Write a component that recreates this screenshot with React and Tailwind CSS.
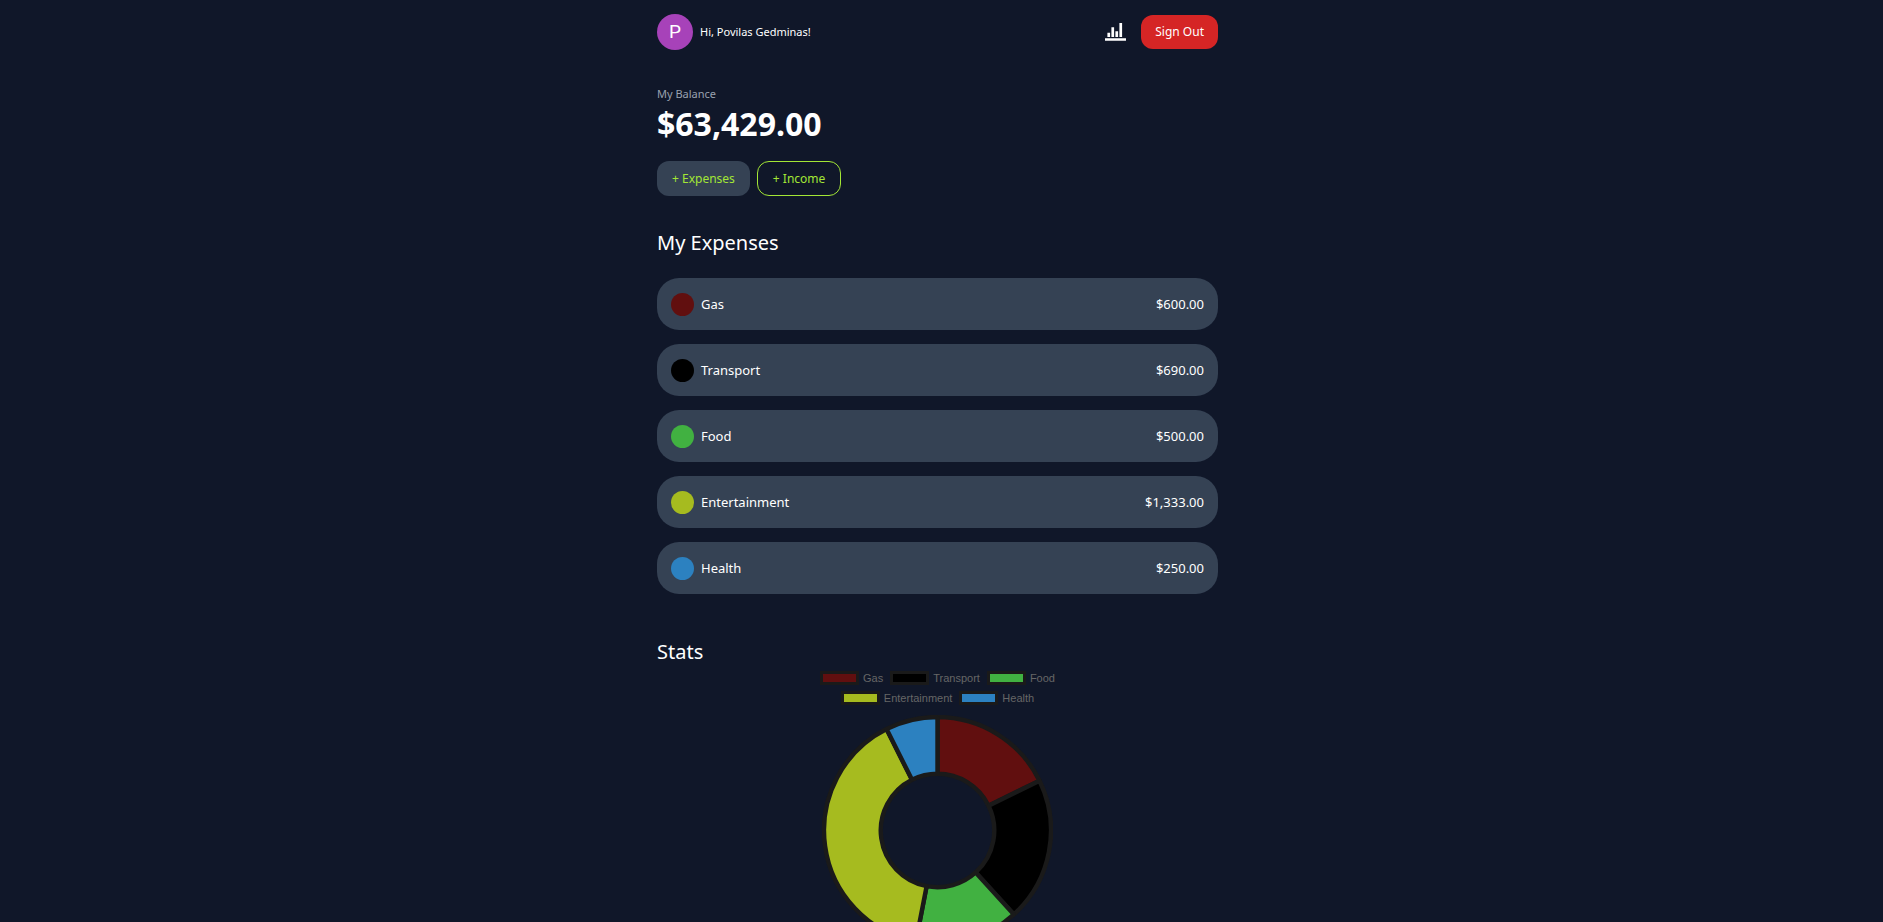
const expenses = [
  { name: "Gas", total: 600, color: "#610f0f" },
  { name: "Transport", total: 690, color: "#000000" },
  { name: "Food", total: 500, color: "#41b141" },
  { name: "Entertainment", total: 1333, color: "#a6bb1f" },
  { name: "Health", total: 250, color: "#2c81c0" },
];

const currency = new Intl.NumberFormat("en-US", { style: "currency", currency: "USD" });

const point = (r, a) => `${115 + r * Math.sin(a)} ${115 - r * Math.cos(a)}`;

function slices(items, outer, inner) {
  const sum = items.reduce((t, i) => t + i.total, 0);
  let angle = 0;
  return items.map((item) => {
    const start = angle;
    const end = start + (item.total / sum) * Math.PI * 2;
    angle = end;
    const large = end - start > Math.PI ? 1 : 0;
    return {
      ...item,
      d: `M${point(outer, start)}A${outer} ${outer} 0 ${large} 1 ${point(outer, end)}L${point(inner, end)}A${inner} ${inner} 0 ${large} 0 ${point(inner, start)}Z`,
    };
  });
}

function StatsIcon() {
  return (
    <svg viewBox="0 0 21 18" className="h-[18px] w-[21px]" fill="currentColor" aria-hidden="true">
      <path d="M2.4 9.7h2.7V14H2.4zM6.4 4.2h2.7V14H6.4zM10.4 8.2h2.7V14h-2.7zM14.4 0h2.7v14h-2.7zM0 15.2h21v2.5H0z" />
    </svg>
  );
}

function Header() {
  return (
    <header className="flex items-center justify-between">
      <div className="flex items-center gap-[7px]">
        <div className="flex size-9 items-center justify-center rounded-full bg-[#a742b9] font-[Roboto,sans-serif] text-[19px] leading-6 text-white">
          P
        </div>
        <small className="text-[11px] leading-4">Hi, Povilas Gedminas!</small>
      </div>
      <nav className="flex items-center gap-[15px]">
        <a href="#stats" aria-label="Stats">
          <StatsIcon />
        </a>
        <button type="button" className="h-[34px] rounded-xl bg-[#d52525] px-[14px] text-[12px] leading-4">
          Sign Out
        </button>
      </nav>
    </header>
  );
}

function ExpenseItem({ name, total, color }) {
  return (
    <li>
      <button
        type="button"
        className="flex h-[52px] w-full items-center justify-between rounded-[22px] bg-[#354254] px-[14px] text-[13px] leading-5"
      >
        <span className="flex items-center gap-[7px]">
          <span className="size-[23px] rounded-full" style={{ backgroundColor: color }} />
          {name}
        </span>
        <span>{currency.format(total)}</span>
      </button>
    </li>
  );
}

function Legend() {
  return (
    <ul className="flex w-[250px] flex-wrap justify-center gap-x-[7px] gap-y-1 font-['Liberation_Sans',Arial,sans-serif] text-[11px] leading-4 text-[#666]">
      {expenses.map((e) => (
        <li key={e.name} className="flex items-center gap-1">
          <span className="h-[14px] w-[39px] border-[3px] border-[#1a1a1a]" style={{ backgroundColor: e.color }} />
          {e.name}
        </li>
      ))}
    </ul>
  );
}

export default function App() {
  return (
    <div className="min-h-screen bg-[#101729] pr-2 font-['Noto_Sans','Segoe_UI',sans-serif] text-white">
      <div className="mx-auto max-w-[605px] px-[22px] pt-[14px]">
        <Header />
        <main>
          <section className="pt-9">
            <small className="block text-[11px] leading-4 text-[#99a1af]">My Balance</small>
            <h2 className="text-[32px] leading-[44px] font-bold">$63,429.00</h2>
          </section>
          <section className="flex gap-[7px] pt-[15px]">
            <button type="button" className="h-[35px] rounded-xl bg-[#354254] px-[15px] text-[12px] leading-4 text-[#a3e635]">
              + Expenses
            </button>
            <button type="button" className="h-[35px] rounded-xl border border-[#a3e635] px-[15px] text-[12px] leading-4 text-[#a3e635]">
              + Income
            </button>
          </section>
          <section className="pt-[31px]">
            <h3 className="text-[20px] leading-8">My Expenses</h3>
            <ul className="flex flex-col gap-[14px] pt-[19px]">
              {expenses.map((e) => (
                <ExpenseItem key={e.name} {...e} />
              ))}
            </ul>
          </section>
          <section id="stats" className="pt-[42px] pb-6">
            <h3 className="text-[20px] leading-8">Stats</h3>
            <div className="flex flex-col items-center gap-[9px] pt-[2px]">
              <Legend />
              <svg viewBox="0 0 230 230" className="size-[231px]" role="img" aria-label="Expenses by category">
                {slices(expenses, 113, 56.5).map((s) => (
                  <path key={s.name} d={s.d} fill={s.color} stroke="#1a1a1a" strokeWidth="4.4" strokeLinejoin="bevel" />
                ))}
              </svg>
            </div>
          </section>
        </main>
      </div>
    </div>
  );
}
